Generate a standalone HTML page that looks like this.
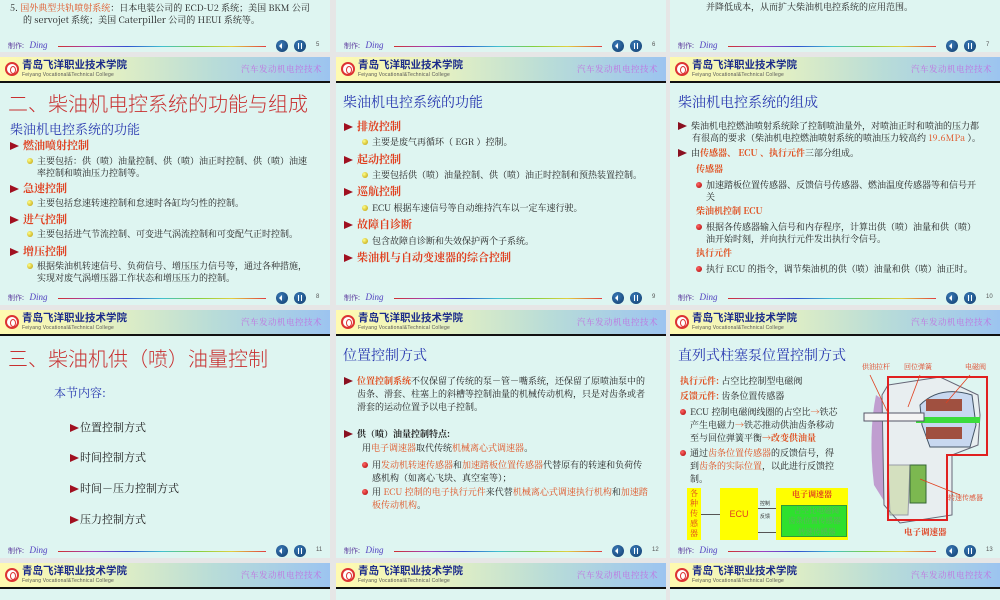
<!DOCTYPE html>
<html><head><meta charset="utf-8">
<style>
*{margin:0;padding:0;box-sizing:border-box}
body{width:1000px;height:600px;position:relative;overflow:hidden;background:#e6e6e6;font-family:"Liberation Serif","Noto Serif CJK SC","Noto Sans CJK SC",serif;color:#222}
.a{position:absolute;white-space:nowrap}
.bg{position:absolute;background:#def5f1}
.hd{position:absolute;height:26px;background:linear-gradient(90deg,#fffab0 0%,#e8f2c0 30%,#b8dcd8 65%,#9cc4f0 100%);border-bottom:2px solid #111}
.hd .logo{position:absolute;left:5px;top:5px;width:14px;height:14px;border:2px solid #d33;border-radius:50%;background:#fff}
.hd .logo:after{content:"";position:absolute;left:3px;top:2px;width:4px;height:6px;border:1.5px solid #d33;border-radius:50%}
.hd .t1{position:absolute;left:22px;top:1px;font:bold 10.5px "Noto Sans CJK SC",sans-serif;color:#1a2a8a;letter-spacing:0px;line-height:14px}
.hd .t2{position:absolute;left:22px;top:15px;font:5px "Liberation Sans",sans-serif;color:#555;letter-spacing:0.2px}
.hd .t3{position:absolute;right:8px;top:6px;font:8.5px "Noto Serif CJK SC",serif;color:#c070e0;letter-spacing:0.5px}
.ft{position:absolute;height:12px}
.ft .m{position:absolute;left:8px;top:0;font:7px "Noto Sans CJK SC",sans-serif;color:#6040a0}
.ft .m i{font:italic 9px "Liberation Serif",serif;color:#5040c0;margin-left:4px}
.ft .ln{position:absolute;left:58px;top:6px;width:208px;height:1px;background:linear-gradient(90deg,#d03030,#a040c0,#3050d0,#40c0d0,#80d040,#e0d040,#e04040)}
.ft .b{position:absolute;top:0;width:12px;height:12px;border-radius:50%;background:radial-gradient(circle at 40% 35%,#3a7ab8,#0f3a6a)}
.ft .b1{left:276px}.ft .b2{left:294px}
.ft .b1:after{content:"";position:absolute;left:3px;top:3px;border:3px solid transparent;border-right:3px solid #fff;border-left:0}
.ft .b2:after{content:"";position:absolute;left:3.5px;top:3px;width:1.5px;height:6px;background:#fff;box-shadow:3px 0 0 #fff}
.ft .n{position:absolute;left:316px;top:2px;font:6px "Liberation Sans",sans-serif;color:#555}
.t{font-size:9px;color:#222;font-family:"Noto Serif CJK SC",serif}
.r{color:#e05020}
.h2{font:bold 11px "Noto Serif CJK SC",serif;color:#e04020}
.tri{display:inline-block;width:0;height:0;border-top:4.5px solid transparent;border-bottom:4.5px solid transparent;border-left:9px solid #a01020;margin-right:4px;vertical-align:-1px}
.dot{display:inline-block;width:6px;height:6px;border-radius:50%;background:radial-gradient(circle at 35% 35%,#ff8,#b90);margin-right:4px}
.rd{display:inline-block;width:6px;height:6px;border-radius:50%;background:radial-gradient(circle at 35% 35%,#f66,#a00);margin-right:4px}
.bt{font:14px "Noto Serif CJK SC",serif;color:#2838b0}
.big{font:20px "Noto Sans CJK SC",sans-serif;color:#c83030;font-weight:300}
</style></head><body>

<div class="bg" style="left:0;top:0;width:330px;height:52px"></div>
<div class="bg" style="left:336px;top:0;width:330px;height:52px"></div>
<div class="bg" style="left:670px;top:0;width:330px;height:52px"></div>
<div class="bg" style="left:0;top:83px;width:330px;height:222px"></div>
<div class="bg" style="left:336px;top:83px;width:330px;height:222px"></div>
<div class="bg" style="left:670px;top:83px;width:330px;height:222px"></div>
<div class="bg" style="left:0;top:336px;width:330px;height:222px"></div>
<div class="bg" style="left:336px;top:336px;width:330px;height:222px"></div>
<div class="bg" style="left:670px;top:336px;width:330px;height:222px"></div>
<div class="bg" style="left:0;top:589px;width:330px;height:11px"></div>
<div class="bg" style="left:336px;top:589px;width:330px;height:11px"></div>
<div class="bg" style="left:670px;top:589px;width:330px;height:11px"></div>

<div class="hd" style="left:0;top:57px;width:330px"><div class="logo"></div><div class="t1">青岛飞洋职业技术学院</div><div class="t2">Feiyang Vocational&amp;Technical College</div><div class="t3">汽车发动机电控技术</div></div>
<div class="hd" style="left:336px;top:57px;width:330px"><div class="logo"></div><div class="t1">青岛飞洋职业技术学院</div><div class="t2">Feiyang Vocational&amp;Technical College</div><div class="t3">汽车发动机电控技术</div></div>
<div class="hd" style="left:670px;top:57px;width:330px"><div class="logo"></div><div class="t1">青岛飞洋职业技术学院</div><div class="t2">Feiyang Vocational&amp;Technical College</div><div class="t3">汽车发动机电控技术</div></div>
<div class="hd" style="left:0;top:310px;width:330px"><div class="logo"></div><div class="t1">青岛飞洋职业技术学院</div><div class="t2">Feiyang Vocational&amp;Technical College</div><div class="t3">汽车发动机电控技术</div></div>
<div class="hd" style="left:336px;top:310px;width:330px"><div class="logo"></div><div class="t1">青岛飞洋职业技术学院</div><div class="t2">Feiyang Vocational&amp;Technical College</div><div class="t3">汽车发动机电控技术</div></div>
<div class="hd" style="left:670px;top:310px;width:330px"><div class="logo"></div><div class="t1">青岛飞洋职业技术学院</div><div class="t2">Feiyang Vocational&amp;Technical College</div><div class="t3">汽车发动机电控技术</div></div>
<div class="hd" style="left:0;top:563px;width:330px"><div class="logo"></div><div class="t1">青岛飞洋职业技术学院</div><div class="t2">Feiyang Vocational&amp;Technical College</div><div class="t3">汽车发动机电控技术</div></div>
<div class="hd" style="left:336px;top:563px;width:330px"><div class="logo"></div><div class="t1">青岛飞洋职业技术学院</div><div class="t2">Feiyang Vocational&amp;Technical College</div><div class="t3">汽车发动机电控技术</div></div>
<div class="hd" style="left:670px;top:563px;width:330px"><div class="logo"></div><div class="t1">青岛飞洋职业技术学院</div><div class="t2">Feiyang Vocational&amp;Technical College</div><div class="t3">汽车发动机电控技术</div></div>

<div class="ft" style="left:0;top:40px;width:330px"><div class="m">制作: <i>Ding</i></div><div class="ln"></div><div class="b b1"></div><div class="b b2"></div><div class="n">5</div></div>
<div class="ft" style="left:336px;top:40px;width:330px"><div class="m">制作: <i>Ding</i></div><div class="ln"></div><div class="b b1"></div><div class="b b2"></div><div class="n">6</div></div>
<div class="ft" style="left:670px;top:40px;width:330px"><div class="m">制作: <i>Ding</i></div><div class="ln"></div><div class="b b1"></div><div class="b b2"></div><div class="n">7</div></div>
<div class="ft" style="left:0;top:292px;width:330px"><div class="m">制作: <i>Ding</i></div><div class="ln"></div><div class="b b1"></div><div class="b b2"></div><div class="n">8</div></div>
<div class="ft" style="left:336px;top:292px;width:330px"><div class="m">制作: <i>Ding</i></div><div class="ln"></div><div class="b b1"></div><div class="b b2"></div><div class="n">9</div></div>
<div class="ft" style="left:670px;top:292px;width:330px"><div class="m">制作: <i>Ding</i></div><div class="ln"></div><div class="b b1"></div><div class="b b2"></div><div class="n">10</div></div>
<div class="ft" style="left:0;top:545px;width:330px"><div class="m">制作: <i>Ding</i></div><div class="ln"></div><div class="b b1"></div><div class="b b2"></div><div class="n">11</div></div>
<div class="ft" style="left:336px;top:545px;width:330px"><div class="m">制作: <i>Ding</i></div><div class="ln"></div><div class="b b1"></div><div class="b b2"></div><div class="n">12</div></div>
<div class="ft" style="left:670px;top:545px;width:330px"><div class="m">制作: <i>Ding</i></div><div class="ln"></div><div class="b b1"></div><div class="b b2"></div><div class="n">13</div></div>

<div class="a t" style="left:10px;top:1px">5. <span class="r">国外典型共轨喷射系统</span>：日本电装公司的 ECD-U2 系统；美国 BKM 公司</div>
<div class="a t" style="left:23px;top:13px">的 servojet 系统；美国 Caterpiller 公司的 HEUI 系统等。</div>
<div class="a t" style="left:706px;top:0px">并降低成本，从而扩大柴油机电控系统的应用范围。</div>

<div class="a big" style="left:8px;top:88px">二、柴油机电控系统的功能与组成</div>
<div class="a" style="left:10px;top:119px;font:13px 'Noto Serif CJK SC',serif;color:#2838b0">柴油机电控系统的功能</div>
<div class="a h2" style="left:10px;top:137px"><span class="tri"></span>燃油喷射控制</div>
<div class="a t" style="left:27px;top:154px"><span class="dot"></span>主要包括：供（喷）油量控制、供（喷）油正时控制、供（喷）油速</div>
<div class="a t" style="left:37px;top:166px">率控制和喷油压力控制等。</div>
<div class="a h2" style="left:10px;top:180px"><span class="tri"></span>急速控制</div>
<div class="a t" style="left:27px;top:196px"><span class="dot"></span>主要包括怠速转速控制和怠速时各缸均匀性的控制。</div>
<div class="a h2" style="left:10px;top:211px"><span class="tri"></span>进气控制</div>
<div class="a t" style="left:27px;top:227px"><span class="dot"></span>主要包括进气节流控制、可变进气涡流控制和可变配气正时控制。</div>
<div class="a h2" style="left:10px;top:243px"><span class="tri"></span>增压控制</div>
<div class="a t" style="left:27px;top:259px"><span class="dot"></span>根据柴油机转速信号、负荷信号、增压压力信号等，通过各种措施，</div>
<div class="a t" style="left:37px;top:271px">实现对废气涡增压器工作状态和增压压力的控制。</div>

<div class="a bt" style="left:343px;top:92px">柴油机电控系统的功能</div>
<div class="a h2" style="left:344px;top:118px"><span class="tri"></span>排放控制</div>
<div class="a t" style="left:362px;top:135px"><span class="dot"></span>主要是废气再循环（ EGR ）控制。</div>
<div class="a h2" style="left:344px;top:151px"><span class="tri"></span>起动控制</div>
<div class="a t" style="left:362px;top:168px"><span class="dot"></span>主要包括供（喷）油量控制、供（喷）油正时控制和预热装置控制。</div>
<div class="a h2" style="left:344px;top:183px"><span class="tri"></span>巡航控制</div>
<div class="a t" style="left:362px;top:201px"><span class="dot"></span>ECU 根据车速信号等自动维持汽车以一定车速行驶。</div>
<div class="a h2" style="left:344px;top:216px"><span class="tri"></span>故障自诊断</div>
<div class="a t" style="left:362px;top:234px"><span class="dot"></span>包含故障自诊断和失效保护两个子系统。</div>
<div class="a h2" style="left:344px;top:249px"><span class="tri"></span>柴油机与自动变速器的综合控制</div>

<div class="a bt" style="left:678px;top:92px">柴油机电控系统的组成</div>
<div class="a t" style="left:678px;top:119px"><span class="tri" style="border-left-color:#8a1020"></span>柴油机电控燃油喷射系统除了控制喷油量外，对喷油正时和喷油的压力都</div>
<div class="a t" style="left:692px;top:131px">有很高的要求（柴油机电控燃油喷射系统的喷油压力较高约 <span class="r">19.6MPa</span> ）。</div>
<div class="a t" style="left:678px;top:146px"><span class="tri" style="border-left-color:#8a1020"></span>由<b class="r">传感器、 ECU 、执行元件</b>三部分组成。</div>
<div class="a t r" style="left:696px;top:162px;font-weight:bold">传感器</div>
<div class="a t" style="left:696px;top:178px"><span class="rd"></span>加速踏板位置传感器、反馈信号传感器、燃油温度传感器等和信号开</div>
<div class="a t" style="left:706px;top:190px">关</div>
<div class="a t r" style="left:696px;top:204px;font-weight:bold">柴油机控制 ECU</div>
<div class="a t" style="left:696px;top:220px"><span class="rd"></span>根据各传感器输入信号和内存程序，计算出供（喷）油量和供（喷）</div>
<div class="a t" style="left:706px;top:232px">油开始时刻，并向执行元件发出执行令信号。</div>
<div class="a t r" style="left:696px;top:246px;font-weight:bold">执行元件</div>
<div class="a t" style="left:696px;top:262px"><span class="rd"></span>执行 ECU 的指令，调节柴油机的供（喷）油量和供（喷）油正时。</div>

<div class="a big" style="left:8px;top:343px">三、柴油机供（喷）油量控制</div>
<div class="a" style="left:54px;top:384px;font:12px 'Noto Serif CJK SC',serif;color:#2838b0">本节内容:</div>
<div class="a" style="left:70px;top:419px;font:11px 'Noto Serif CJK SC',serif"><span class="tri" style="margin-right:1px"></span>位置控制方式</div>
<div class="a" style="left:70px;top:449px;font:11px 'Noto Serif CJK SC',serif"><span class="tri" style="margin-right:1px"></span>时间控制方式</div>
<div class="a" style="left:70px;top:480px;font:11px 'Noto Serif CJK SC',serif"><span class="tri" style="margin-right:1px"></span>时间－压力控制方式</div>
<div class="a" style="left:70px;top:511px;font:11px 'Noto Serif CJK SC',serif"><span class="tri" style="margin-right:1px"></span>压力控制方式</div>

<div class="a bt" style="left:343px;top:345px">位置控制方式</div>
<div class="a t" style="left:344px;top:374px"><span class="tri" style="border-left-color:#8a1020"></span><b class="r">位置控制系统</b>不仅保留了传统的泵－管－嘴系统，还保留了原喷油泵中的</div>
<div class="a t" style="left:357px;top:387px">齿条、滑套、柱塞上的斜槽等控制油量的机械传动机构，只是对齿条或者</div>
<div class="a t" style="left:357px;top:400px">滑套的运动位置予以电子控制。</div>
<div class="a t" style="left:344px;top:427px;font-weight:bold"><span class="tri" style="border-left-color:#8a1020"></span>供（喷）油量控制特点:</div>
<div class="a t" style="left:362px;top:441px">用<span class="r">电子调速器</span>取代传统<span class="r">机械离心式调速器</span>。</div>
<div class="a t" style="left:362px;top:458px"><span class="rd"></span>用<span class="r">发动机转速传感器</span>和<span class="r">加速踏板位置传感器</span>代替原有的转速和负荷传</div>
<div class="a t" style="left:372px;top:471px">感机构（如离心飞块、真空室等）；</div>
<div class="a t" style="left:362px;top:485px"><span class="rd"></span>用 <span class="r">ECU 控制的电子执行元件</span>来代替<span class="r">机械离心式调速执行机构</span>和<span class="r">加速踏</span></div>
<div class="a t" style="left:372px;top:498px"><span class="r">板传动机构</span>。</div>

<div class="a bt" style="left:678px;top:345px">直列式柱塞泵位置控制方式</div>
<div class="a t" style="left:680px;top:374px"><b class="r">执行元件:</b> 占空比控制型电磁阀</div>
<div class="a t" style="left:680px;top:389px"><b class="r">反馈元件:</b> 齿条位置传感器</div>
<div class="a t" style="left:680px;top:405px"><span class="rd"></span>ECU 控制电磁阀线圈的占空比<span class="r">→</span>铁芯</div>
<div class="a t" style="left:690px;top:418px">产生电磁力<span class="r">→</span>铁芯推动供油齿条移动</div>
<div class="a t" style="left:690px;top:431px">至与回位弹簧平衡<b class="r">→改变供油量</b></div>
<div class="a t" style="left:680px;top:446px"><span class="rd"></span>通过<span class="r">齿条位置传感器</span>的反馈信号，得</div>
<div class="a t" style="left:690px;top:459px">到<span class="r">齿条的实际位置</span>，以此进行反馈控</div>
<div class="a t" style="left:690px;top:472px">制。</div>
<div class="a" style="left:687px;top:488px;width:14px;height:52px;background:#ff0;font:8px 'Noto Serif CJK SC',serif;color:#e04020;white-space:normal;line-height:10px;text-align:center;padding-top:1px">各种传感器</div>
<div class="a" style="left:720px;top:488px;width:38px;height:52px;background:#ff0;font:9px 'Liberation Sans',sans-serif;color:#e04020;text-align:center;line-height:52px">ECU</div>
<div class="a" style="left:701px;top:514px;width:19px;height:1px;background:#555"></div>
<div class="a" style="left:758px;top:508px;width:22px;height:1px;background:#555"></div>
<div class="a" style="left:758px;top:532px;width:22px;height:1px;background:#555"></div>
<div class="a" style="left:760px;top:500px;font:5px 'Noto Sans CJK SC',sans-serif;color:#333">控制</div>
<div class="a" style="left:760px;top:513px;font:5px 'Noto Sans CJK SC',sans-serif;color:#333">反馈</div>
<div class="a" style="left:776px;top:488px;width:72px;height:52px;background:#ff0"></div>
<div class="a" style="left:792px;top:489px;font:bold 8px 'Noto Serif CJK SC',serif;color:#e04020">电子调速器</div>
<div class="a" style="left:781px;top:505px;width:66px;height:32px;background:#2ee02e;border:1px solid #393"></div>
<div class="a" style="left:794px;top:505px;font:7.5px 'Noto Serif CJK SC',serif;color:#6a6">占空比电磁阀</div>
<div class="a" style="left:788px;top:515px;font:7.5px 'Noto Serif CJK SC',serif;color:#6a6">齿条位置传感器</div>
<div class="a" style="left:798px;top:526px;font:7.5px 'Noto Serif CJK SC',serif;color:#6a6">转速传感器</div>
<svg class="a" style="left:860px;top:355px" width="140" height="190" viewBox="0 0 140 190">
<path d="M16 40 Q8 80 14 130 L24 146 L28 48 Z" fill="#b888c8" opacity=".8"/>
<path d="M28 30 L80 22 L118 40 L120 60 L118 90 L92 100 L92 160 L40 168 L24 150 L22 40 Z" fill="#e8eef0" stroke="#667" stroke-width="1"/>
<path d="M60 50 Q80 30 112 40 L116 70 L110 92 L70 92 L62 70 Z" fill="#c8d8f0" stroke="#456" stroke-width="1"/>
<rect x="66" y="44" width="36" height="12" fill="#a05040"/>
<rect x="66" y="72" width="36" height="12" fill="#a05040"/>
<rect x="56" y="62" width="64" height="6" fill="#3cdc3c"/>
<rect x="4" y="58" width="60" height="8" fill="#f4f4f4" stroke="#556"/>
<rect x="50" y="110" width="16" height="38" fill="#7cb850" stroke="#363"/>
<path d="M28 110 L50 110 L48 160 L30 160 Z" fill="#c8d8a0" opacity=".6" stroke="#667"/>
<path d="M28 22 L127 22 L127 100 L87 100 L87 165 L28 165 Z" fill="none" stroke="#e02020" stroke-width="2"/>
<line x1="10" y1="20" x2="28" y2="58" stroke="#e04020" stroke-width="0.8"/>
<line x1="60" y1="20" x2="48" y2="52" stroke="#e04020" stroke-width="0.8"/>
<line x1="110" y1="20" x2="86" y2="48" stroke="#e04020" stroke-width="0.8"/>
<line x1="100" y1="140" x2="60" y2="124" stroke="#e04020" stroke-width="0.8"/>
<text x="2" y="14" font-size="7" fill="#e04020" font-family="Noto Serif CJK SC">供油拉杆</text>
<text x="44" y="14" font-size="7" fill="#e04020" font-family="Noto Serif CJK SC">回位弹簧</text>
<text x="105" y="14" font-size="7" fill="#e04020" font-family="Noto Serif CJK SC">电磁阀</text>
<text x="88" y="145" font-size="7" fill="#e04020" font-family="Noto Serif CJK SC">转速传感器</text>
<text x="44" y="180" font-size="8.5" font-weight="bold" fill="#e04020" font-family="Noto Serif CJK SC">电子调速器</text>
</svg>
</body></html>
